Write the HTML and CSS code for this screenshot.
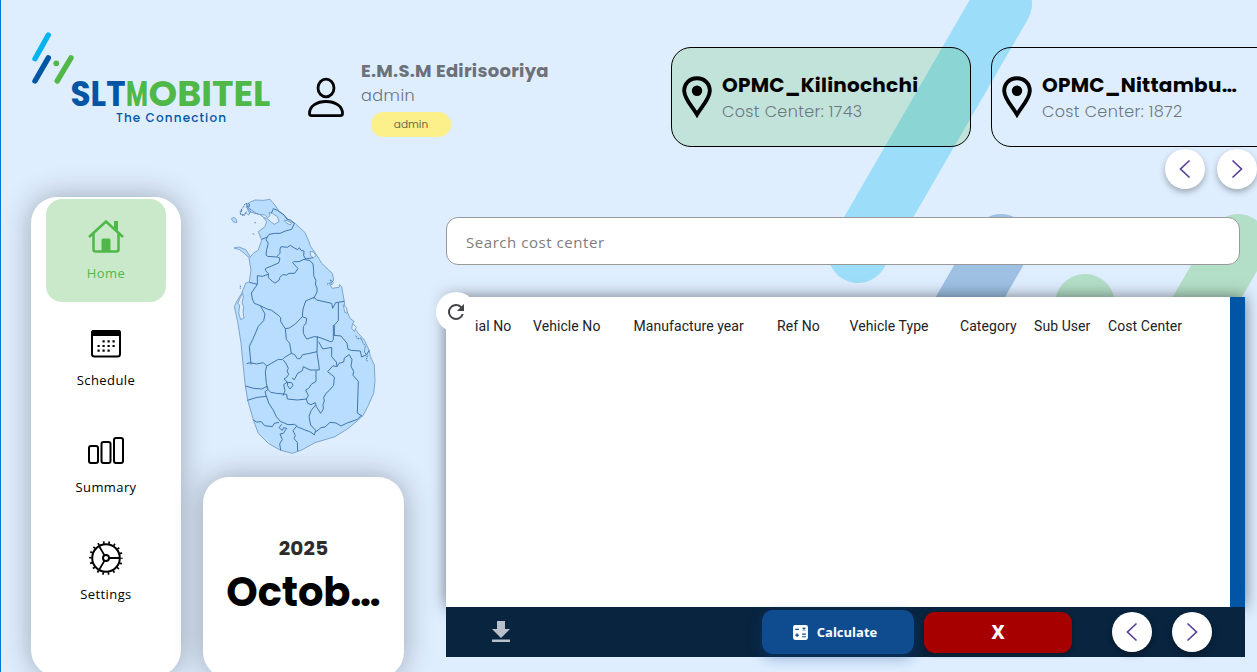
FILE: index.html
```html
<!DOCTYPE html>
<html lang="en">
<head>
<meta charset="utf-8">
<title>SLT Mobitel</title>
<link rel="stylesheet" href="styles.css">
</head>
<body>
<svg class="backdrop" viewBox="0 0 1257 672" fill="none" stroke-linecap="round">
  <path d="M1002 4 858 253" stroke="#9cddf9" stroke-width="60"/>
  <path d="M1001 244 857 493" stroke="#9dc0e3" stroke-width="60"/>
  <path d="M1238 244 1094 493" stroke="#b3dfc8" stroke-width="60"/>
  <circle cx="1085" cy="304" r="30" fill="#b3dfc8"/>
</svg>
<div class="page">
  <header class="top">
    <svg class="logo" viewBox="0 0 250 100">
      <g fill="none" stroke-width="5.4" stroke-linecap="round">
        <path d="M17.3 5 4 28.7" stroke="#00b5ef"/>
        <path d="M17.3 27.8 4 51" stroke="#0055a5"/>
        <path d="M40 27.8 26.200 51" stroke="#50b848"/>
      </g>
      <circle cx="25.300" cy="33.300" r="2.900" fill="#50b848"/>
      <g class="logo-word">
        <text x="39.500" y="75.500" textLength="55" lengthAdjust="spacingAndGlyphs" fill="#0055a5">SLT</text>
        <text x="95" y="75.500" textLength="22" lengthAdjust="spacingAndGlyphs" fill="#50b848">M</text>
        <text x="117.500" y="75.500" textLength="122" lengthAdjust="spacingAndGlyphs" fill="#50b848">OBITEL</text>
      </g>
      <text class="logo-tag" x="85" y="91.500" textLength="110">The Connection</text>
    </svg>
    <svg class="avatar" viewBox="0 0 38 42" fill="none" stroke="#000" stroke-width="2.800">
      <ellipse cx="19" cy="11" rx="8" ry="8.800"/>
      <path d="M2.500 36.500C2.500 29 10 24.500 19 24.500s16.500 4.500 16.500 12c0 1.500-.5 2.200-2 2.200h-29c-1.500 0-2-.7-2-2.200Z"/>
    </svg>
    <div class="user">
      <div class="user-name">E.M.S.M Edirisooriya</div>
      <div class="user-role">admin</div>
      <span class="badge">admin</span>
    </div>
    <div class="centers">
      <div class="center-list">
        <article class="center selected">
          <svg class="pin" viewBox="0 0 30 42"><path d="M15 2.200C7.500 2.200 2.200 7.700 2.200 14.800 2.200 23 10 30 15 38.500 20 30 27.800 23 27.800 14.800 27.800 7.700 22.500 2.200 15 2.200Z" fill="none" stroke="#000" stroke-width="3.900"/><circle cx="15" cy="14.800" r="5.200"/></svg>
          <div><div class="center-name">OPMC_Kilinochchi</div><div class="center-code">Cost Center: 1743</div></div>
        </article>
        <article class="center">
          <svg class="pin" viewBox="0 0 30 42"><path d="M15 2.200C7.500 2.200 2.200 7.700 2.200 14.800 2.200 23 10 30 15 38.500 20 30 27.800 23 27.800 14.800 27.800 7.700 22.500 2.200 15 2.200Z" fill="none" stroke="#000" stroke-width="3.900"/><circle cx="15" cy="14.800" r="5.200"/></svg>
          <div><div class="center-name">OPMC_Nittambu…</div><div class="center-code">Cost Center: 1872</div></div>
        </article>
      </div>
      <div class="pager">
        <button class="round"><svg viewBox="0 0 20 20"><path d="M14.500 1.500 5.500 10l9 8.500"/></svg></button>
        <button class="round"><svg viewBox="0 0 20 20"><path d="m5.500 1.500 9 8.500-9 8.500"/></svg></button>
      </div>
    </div>
  </header>

  <main class="content">
    <nav class="side">
      <a class="item active">
        <svg viewBox="0 0 36 36" fill="none" stroke="#50b848" stroke-width="2.500"><path d="M1 18 18 2.500 35 18M5.500 15v15.500q0 2 2 2h21q2 0 2-2V15"/><path d="M26 2h4v11l-4-4Z" fill="#50b848" stroke="none"/><path d="M13.500 33V21q0-1.500 1.500-1.500h6q1.500 0 1.500 1.500v12Z" fill="#50b848" stroke="none"/></svg>
        <span>Home</span>
      </a>
      <a class="item">
        <svg viewBox="0 0 36 36"><rect x="4" y="5" width="28" height="25.500" rx="2.500" fill="none" stroke="#000" stroke-width="2"/><path d="M3 10V6.500Q3 4 5.500 4h25Q33 4 33 6.500V10Z"/><path d="M14.500 15.300h13M9.500 20h18M9.500 24.700h13" stroke="#000" stroke-width="2.200" stroke-dasharray="2.200 2.800"/></svg>
        <span>Schedule</span>
      </a>
      <a class="item">
        <svg class="bars" viewBox="0 0 38 36" fill="none" stroke="#000" stroke-width="2"><rect x="2" y="13" width="9" height="17" rx="2"/><rect x="14.500" y="9" width="9" height="21" rx="2"/><rect x="27" y="5" width="9" height="25" rx="2"/></svg>
        <span>Summary</span>
      </a>
      <a class="item">
        <svg viewBox="0 0 36 36" fill="none" stroke="#000" stroke-width="2"><circle cx="18" cy="18" r="13.800"/><circle cx="18" cy="18" r="3"/><circle cx="18" cy="18" r="15.600" stroke-width="2.500" stroke-dasharray="1.700 3.746" stroke-dashoffset=".85"/><path d="M21 18h11M16.500 15.400 11 6M16.500 20.600 11 30" stroke-width="1.800"/></svg>
        <span>Settings</span>
      </a>
    </nav>

    <section class="overview">
      <svg class="map" viewBox="0 0 540 825" fill="none" stroke="#4076aa" stroke-width="3" stroke-linejoin="round">
        <path fill="#b9ddff" stroke="#7da5cd" d="m95 45 9-8 16-7 26 1 19-3 17 20 8 13 17 14 17 17 16 8 30 28 12 27 5 15 13 18 13 20 7 12 32 30 4 20-11 15 7 10 20-3 2-8 6 6 8 45 2 15 15 35 13 10-6 5 6 15 12 15 18 20 14 30 4 20 12 25 2 50-4 35-18 40-13 25-15 15-30 25-40 25-60 18-40 22-28 10-37-10-35-20-30-30-15-40-17-60-8-50-5-50-7-70-10-65-10-45 7-15 15-25 12-30 11-5 5-35-6-35 13-15 15-10 10-30-10-25 20-15 5-15-15-20-40-10Z"/>
        <path fill="#b9ddff" stroke="#7da5cd" d="m57 174 15-3 20 8 12 18-3 5-13-12-14-11Zm-8-88 8-4 8 7v9l-11-3Z"/>
        <path fill="#dfeeff" stroke="#7da5cd" d="m134 73 15 2 9 8 7-6-3-10 10 3 16 11 4 14-14 8-9-6-12-11-11-4Zm73 17 12 3 11 7-5 5-13-8Zm78 95 10 0 8 12-8 7-8-8Z"/>
        <path fill="#dfeeff" stroke="#7da5cd" d="m77 320 6-12 2 15-4 15 5 12-2 16 3 18-10 5-6-20 3-24-6-5Zm308 24 10 10 2 16-8-3Zm28 56 11 12-6 12-8-9Z"/>
        <path stroke-dasharray="4 2" d="m75 65 10-14 5-9 10-3 4 8-5 8 7 10-5 10-9-7-8 8-9-5 7-10Zm17-12 13-9m-30 27 13 6 6-12m0-22 8 12 20 14 9 4M120 96v5m-7 30 6 3m-43 153v9m260-13 13-6-3-8 10 9-8 8m74 151 6 10 10-3 7 17 6 6-3 20 9 8-3 15 5 5"/>
        <path d="m140 148 17-7 5-8 17-3 16 0 16-7 19-5 8-18-12-10-10-2-9-13-20-14-12-5-6 14M157 142l-4 7 7 11-5 18-2 17 4 4 28 2M195 205l-10-5M195 205l-4 14-21 9-18 7-1 6 9 10 0 12 12 11 8 5 12-8 3-9 8-8 12 1 7-5 17 0 10-14-7-8-9-10 3-3 16 0 15-7 18 4 9 10 2 20 0 15 7 15-2 10 5 12 0 12-10 20M185 200l10-10 0-13 3-7 19 2 9-6 12 8 10 5 5-6 5 8 9 2-1 14 6 10 22-4M103 277l24 6v-26l15 2 18-6M127 283l-18 26 3 18 6 13 18 7 14 25-4 20-16 17-17 40-10 20 5 55"/>
        <path d="m136 347 20 10 14 4 20 15 7 7 0 12 14 21 12-2 18-12 21-22 13 5-2 14-8 11 0 20 10 17 22-7 15 2 38 14 5-7 0-44M262 380l2-23 8-24 25-11 8 8 45 10 3 15 9-17 26-4M370 338l0 54-12 13 0 33M211 416l3 32 10 12 5 30M229 490l-20 12-8 7-11-1-21 12-14 8-10-10-20 4-20-4-10 3M229 490l10 4 8 12 8 0 8-12 17-3 26-6M307 438l-1 52 5 30 2 20-28 0-20-10-3 12-14 8-10 19-7-5"/>
        <path d="m311 455 12 22 27-5 0 28 14 16 2 14 6-10 14-4 2-12 15-10 8 15-3 20 8 15-2 12 16 18-3 95 15 10M358 436l20 2 10 12 8 10 3 18 10 3 27 2 4 18 15-7 8-14M365 530l-11-3-16 18 20 16-2 25-13 15-10 9-7 13 2 10-4 10 1 14-8 13-13-20-3-12-13 6-10-4-4-13 6-10-8-17 9-5 8-12 14-9 0-33M155 528l-4 17 3 35 5 19 8 8 18 3 30 3 2 14 30 3 28-3M205 510l9 12 6 13-4 8 5 10-6 9-8 5 11 10-1 9 8 11 9-11-4-8-14-1-10 7 4 18-6 15M91 588l25 7 24 2 16-8 2 10-8 6 4 14-28 3-29 9M154 618l7 21 13 20 10 21 12 14 23 10 20-1 9 8 40 16 10 8 4-14-15-16-5-25 6-18 13-16M115 690l10 6 14-1 10 12 23 3 6-10 14-3M302 726l16-13 12-2 15-14 18 2 15 9 16-8 33-12 12-12M200 703l-8 10 10 8 4-8 9 2-10 15-10 2 7 17-8 12 3 20M246 707l-12 15 7 14-4 10 10 11 1 27"/>
      </svg>
      <div class="date-card">
        <div class="year">2025</div>
        <div class="month">Octob…</div>
      </div>
    </section>

    <section class="data">
      <input class="search" placeholder="Search cost center">
      <div class="table">
        <div class="refresh"><svg viewBox="0 0 24 24" fill="#44444b"><path d="M17.650 6.350A8 8 0 1 0 19.730 14h-2.080A6 6 0 1 1 12 6c1.660 0 3.140.69 4.220 1.780L13 11h7V4z"/></svg></div>
        <div class="cols">
          <span>ial No</span><span>Vehicle No</span><span>Manufacture year</span><span>Ref No</span><span>Vehicle Type</span><span>Category</span><span>Sub User</span><span>Cost Center</span>
        </div>
      </div>
      <footer class="actions">
        <svg class="download" viewBox="0 0 20 22"><path d="M6 0h8v8h5l-9 9-9-9h5ZM1 18.500h18v2.500H1Z" fill="#b8c1c9"/></svg>
        <button class="calc"><svg viewBox="0 0 16 16"><rect x="1" y="1" width="14" height="14" rx="2" fill="#fff"/><path d="M3 5h3.500M10 3.500l2.500 2.500M12.500 3.500 10 6M3 10.500h3.500M4.750 8.750v3.500M9.500 9.500h3.500M9.500 12h3.500" stroke="#0e4b8f" stroke-width="1.100"/></svg>Calculate</button>
        <button class="cancel">X</button>
        <div class="pager bottom">
          <button class="round"><svg viewBox="0 0 20 20"><path d="M14.500 1.500 5.500 10l9 8.500"/></svg></button>
          <button class="round"><svg viewBox="0 0 20 20"><path d="m5.500 1.500 9 8.500-9 8.500"/></svg></button>
        </div>
      </footer>
    </section>
  </main>
</div>
</body>
</html>
```
FILE: styles.css
```css
* { box-sizing: border-box; }
body { margin: 0; height: 672px; overflow: hidden; background: #dfeeff; font-family: Poppins, Inter, sans-serif; }
button { border: 0; padding: 0; }
.backdrop { position: absolute; inset: 0; width: 1257px; height: 672px; }
.page { position: relative; height: 672px; overflow: hidden; border-left: 1px solid #0078d4; }
.top { display: flex; height: 197px; padding-left: 30px; }
.logo { flex: none; width: 250px; height: 100px; margin-top: 30px; }
.logo-word { font: 700 34.500px Poppins, Inter, sans-serif; }
.logo-tag { font: 500 12px Poppins, Inter, sans-serif; fill: #0055a5; }
.avatar { flex: none; width: 38px; height: 42px; margin: 77px 0 0 26px; }
.user { flex: none; width: 326px; padding: 58px 0 0 16px; color: #6a7178; }
.user-name { font-size: 18px; font-weight: 700; line-height: 25px; letter-spacing: .25px; }
.user-role { font-size: 16px; line-height: 26px; font-weight: 300; letter-spacing: .5px; }
.badge { display: block; width: 80px; height: 25px; margin: 3px 0 0 10px; border-radius: 13px; background: #fbf08a; color: #6d6b47; font-size: 10.500px; font-weight: 400; line-height: 25px; text-align: center; }
.centers { flex: 1; min-width: 0; padding-top: 47px; }
.center-list { display: flex; gap: 20px; overflow: hidden; }
.center { display: flex; flex: none; gap: 10px; width: 300px; height: 100px; padding: 24px 0 0 10px; border: 1px solid #000; border-radius: 20px; }
.selected { background: rgba(80, 184, 72, .2); }
.pin { width: 30px; height: 42px; margin-top: 4px; }
.center-name { font-size: 20px; font-weight: 700; line-height: 26px; letter-spacing: .25px; white-space: nowrap; }
.center-code { font-size: 16px; font-weight: 300; line-height: 28px; letter-spacing: .36px; color: #6c7780; }
.pager { display: flex; justify-content: flex-end; gap: 12px; margin-top: 2px; }
.round { display: grid; place-items: center; width: 40px; height: 40px; border-radius: 50%; background: #fff; box-shadow: 0 3px 6px rgba(0, 0, 0, .3); }
.round svg { width: 20px; height: 20px; fill: none; stroke: #5a3f9b; stroke-width: 1.700; }
.content { display: flex; height: 475px; padding-left: 30px; }
.side { flex: none; width: 150px; height: 479px; padding: 2px 15px; border-radius: 26px; background: #fff; box-shadow: 0 0 30px rgba(0, 0, 0, .31); font-family: "Segoe UI", "Open Sans", sans-serif; }
.item { display: flex; flex-direction: column; align-items: center; height: 103px; margin-bottom: 4px; padding-top: 20px; border-radius: 16px; font-size: 13px; letter-spacing: .4px; }
.item svg { width: 36px; height: 36px; }
.item .bars { width: 38px; }
.item span { margin-top: 8px; line-height: 20px; }
.active { background: #cae9ca; color: #50b848; }
.overview { flex: none; width: 201px; margin-left: 22px; }
.map { display: block; width: 180px; height: 275px; margin: -7px 0 0 12px; }
.date-card { display: flex; flex-direction: column; align-items: center; width: 201px; height: 201px; margin-top: 12px; padding-top: 57px; border-radius: 26px; background: #fff; box-shadow: 0 0 30px rgba(0, 0, 0, .31); }
.year { font-size: 20px; font-weight: 700; line-height: 28px; letter-spacing: .2px; color: #2c2c2c; }
.month { font-size: 40px; font-weight: 700; line-height: 60px; letter-spacing: -.1px; }
.data { flex: none; width: 799px; margin: 20px 0 0 42px; }
.search { display: block; width: 794px; height: 48px; padding: 2px 19px 0; border: 1px solid #999; border-radius: 12px; background: #fff; font: 15px "Segoe UI", "Open Sans", sans-serif; letter-spacing: .55px; }
.search::placeholder { color: #7d7d7d; }
.table { position: relative; height: 310px; margin-top: 32px; border-right: 15px solid #0055a5; background: #fff; box-shadow: 0 0 15px rgba(0, 0, 0, .5); }
.refresh { position: absolute; left: -10px; top: -5px; display: grid; place-items: center; width: 40px; height: 40px; border-radius: 50%; background: #fff; }
.refresh svg { width: 24px; height: 24px; }
.cols { display: grid; grid-template-columns: 58px 100.500px 143.500px 72.500px 110.500px 74px 74px auto; padding: 19px 0 0 29px; font: 400 14px/20px Roboto, sans-serif; letter-spacing: .07px; color: #222226; white-space: nowrap; }
.actions { position: relative; display: flex; align-items: center; height: 50px; background: #08243f; }
.download { width: 20px; height: 22px; margin-left: 45px; }
.calc { display: flex; align-items: center; justify-content: center; gap: 8px; width: 152px; height: 44px; margin-left: 251px; padding-right: 7px; border-radius: 11px; background: #0e4b8f; color: #fff; font: 700 13px "Segoe UI", "Open Sans", sans-serif; box-shadow: 0 4px 14px rgba(14, 75, 143, .4); }
.calc svg { width: 17px; height: 17px; }
.cancel { width: 148px; height: 41px; margin-left: 10px; border-radius: 11px; background: #a60000; color: #fff; font: 800 19px "Segoe UI", "Noto Sans", sans-serif; box-shadow: 0 2px 5px rgba(0, 0, 0, .3); }
.bottom { gap: 20px; margin: 0 0 0 40px; }
```
